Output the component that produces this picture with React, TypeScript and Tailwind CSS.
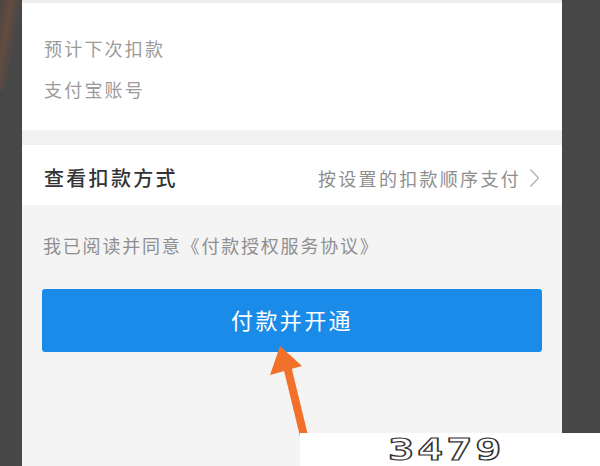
const cjk = "font-['Noto_Sans_CJK_SC','Noto_Sans',sans-serif]";

const Chevron = () => (
    <svg width="11" height="20" viewBox="0 0 11 20" fill="none" className="ml-[8px]">
        <path d="M1.5 1.5 L9.5 10 L1.5 18.5" stroke="#b4b4b4" strokeWidth="1.4" />
    </svg>
);

const Arrow = () => (
    <svg className="absolute left-0 top-0" width="600" height="466" viewBox="0 0 600 466">
        <line x1="287" y1="366" x2="305" y2="440" stroke="#f2712a" strokeWidth="8" />
        <polygon points="280,346 270,375 302,366" fill="#f2712a" />
    </svg>
);

export default function App() {
    return (
        <div className={`relative w-[600px] h-[466px] overflow-hidden flex bg-[#474747] ${cjk}`}>
            <div className="w-[22px] h-full bg-[linear-gradient(100deg,#4a4440_0%,#634c40_30%,#474747_60%)] bg-no-repeat bg-[length:22px_90px]" />

            <div className="w-[540px] h-full flex flex-col bg-[#f4f4f5]">
                <div className="h-[3px] bg-[#ececec]" />
                <div className="bg-white pl-[22px] pt-[33px] pb-[29px] flex flex-col gap-[17px] text-[18px] leading-[24px] tracking-[2.2px] text-[#9b9b9b]">
                    <div>预计下次扣款</div>
                    <div>支付宝账号</div>
                </div>
                <div className="h-[15px] bg-[#f1f1f1]" />
                <div className="h-[60px] bg-white flex items-center justify-between pl-[22px] pr-[22px] pt-[6px]">
                    <div className="text-[20px] tracking-[2.3px] text-[#333333] font-medium">查看扣款方式</div>
                    <div className="flex items-center">
                        <span className="text-[18px] tracking-[2.3px] text-[#8e8e8e]">按设置的扣款顺序支付</span>
                        <Chevron />
                    </div>
                </div>
                <div className="mt-[28px] pl-[21px] text-[18px] leading-[24px] tracking-[1.8px] text-[#8f8f8f]">
                    我已阅读并同意《付款授权服务协议》
                </div>
                <button className="mt-[32px] mx-[20px] h-[63px] rounded-[3px] bg-[#1a8be8] text-white text-[22px] tracking-[2.4px] flex items-center justify-center pb-[3px]">
                    付款并开通
                </button>
            </div>

            <div className="flex-1 h-full bg-[#474747]" />

            <Arrow />

            <div className="absolute right-0 bottom-0 w-[300px] h-[33px] bg-white flex items-center pl-[88px]">
                <span className="inline-block origin-left scale-x-[1.45] font-['DejaVu_Sans_Mono',monospace] font-bold text-[30px] leading-none tracking-[2px] text-white [-webkit-text-stroke:1.2px_#333]">
                    3479
                </span>
            </div>
        </div>
    );
}
